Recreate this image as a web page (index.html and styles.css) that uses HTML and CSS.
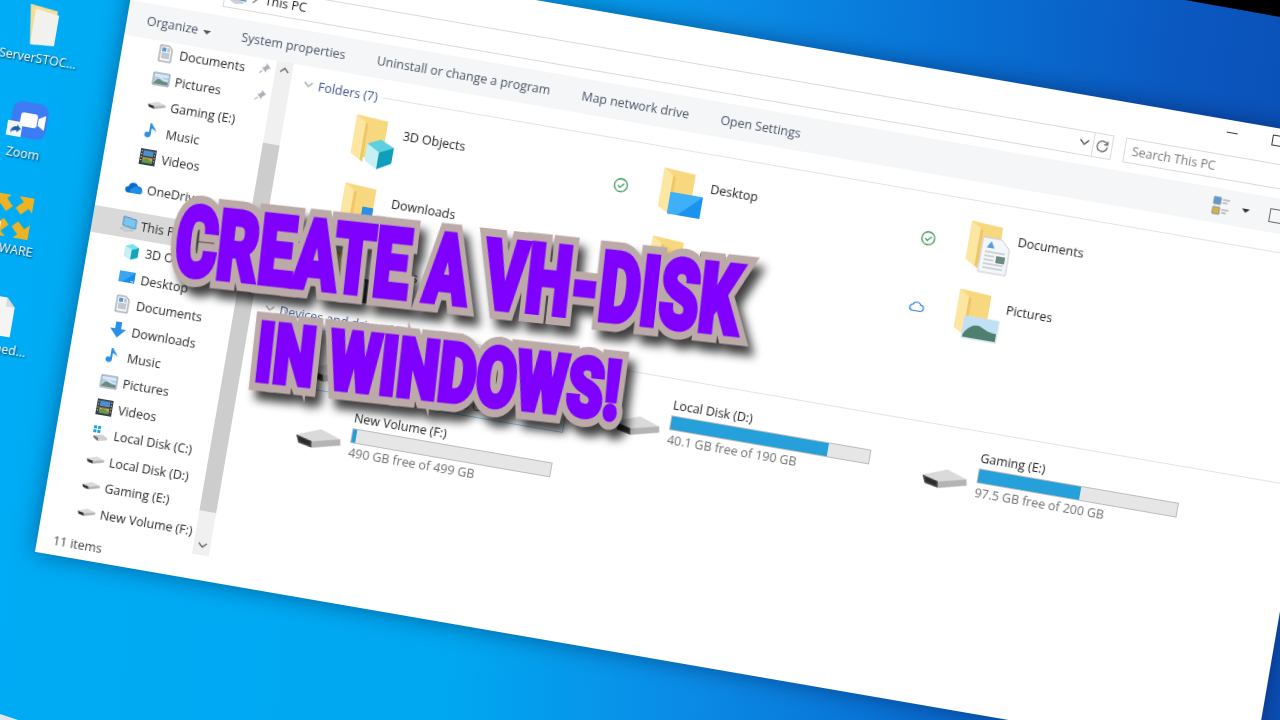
FILE: index.html
```html
<!DOCTYPE html>
<html lang="en">
<head>
    <meta charset="UTF-8">
    <meta name="viewport" content="width=device-width, initial-scale=1.0">
    <title>Create a VH-Disk in Windows</title>
    <link rel="stylesheet" href="styles.css">
</head>
<body>
    <!-- icon sprite -->
    <svg class="sprite" aria-hidden="true">
        <symbol id="i-doc" viewBox="0 0 18 18"><path d="M3 1h9l3 3v13H3z" fill="#f3f5f7" stroke="#89929b"/><path d="M5 3h4v4H5z" fill="#5b9bd5"/><path d="M5 9h8M5 11h8M5 13h8M10 4h3M10 6h3" stroke="#8f9aa5"/></symbol>
        <symbol id="i-pic" viewBox="0 0 18 18"><path d="M1 3h16v12H1z" fill="#d6e8f5" stroke="#7e8e9c"/><path d="M2 13c2-4 4-5 6-4s5 2 8 2v3H2z" fill="#6d8a80"/><path d="M2 7h14v2c-3 0-5-1-7-2-2 0-4 1-7 4z" fill="#a9cbe4"/></symbol>
        <symbol id="i-note" viewBox="0 0 18 18"><path d="M8 1v11.5a3.2 2.8 0 1 1-2-2.500V1z" fill="#2a90e8"/><path d="M8 1c1 3.500 5 4 4.500 8.500C12 7 10 6.500 8 6z" fill="#2a90e8"/></symbol>
        <symbol id="i-film" viewBox="0 0 18 18"><path d="M1 1h16v16H1z" fill="#3a3f46"/><path d="M4 2.500h10v5.500H4z" fill="#4d8fcf"/><path d="M4 9.500h10V15H4z" fill="#d6a53a"/><path d="M4 12l4-2 6 3v2H4z" fill="#5f9b4c"/><path d="M2 3h1v1H2zM2 6h1v1H2zM2 9h1v1H2zM2 12h1v1H2zM15 3h1v1h-1zM15 6h1v1h-1zM15 9h1v1h-1zM15 12h1v1h-1z" fill="#e6e6e6"/></symbol>
        <symbol id="i-cloud" viewBox="0 0 20 14"><path d="M4 12.500a3.500 3.500 0 0 1-.5-7A5.500 5.500 0 0 1 14 4.200 4.200 4.200 0 0 1 15.500 12.500z" fill="#0a6cc8"/><path d="M8 12.500a2.500 2.500 0 0 1 0-5 4 4 0 0 1 7.500-.8 3 3 0 0 1 4 3 2.800 2.800 0 0 1-2.500 2.800z" fill="#1f8fe6"/></symbol>
        <symbol id="i-pc" viewBox="0 0 18 18"><path d="M4 2l13 2v9L4 11z" fill="#7cc4f2" stroke="#4d8fbf"/><path d="M2 14l8-1 5 2-8 1.500z" fill="#cfd6dc" stroke="#9aa4ad" stroke-width=".5"/></symbol>
        <symbol id="i-cube" viewBox="0 0 18 18"><path d="M9 1l7 3-7 3-7-3z" fill="#7fe0ec"/><path d="M2 4l7 3v10l-7-3z" fill="#c5f0f4"/><path d="M16 4L9 7v10l7-3z" fill="#12a3bd"/></symbol>
        <symbol id="i-desk" viewBox="0 0 18 18"><path d="M1 3h16v11H1z" fill="#1a8de8"/><path d="M1 3h16L5 14H1z" fill="#3aa5f2"/><path d="M13 12h3v1h-3z" fill="#e6f3fc"/></symbol>
        <symbol id="i-down" viewBox="0 0 18 18"><path d="M6 1h6v7h5l-8 9-8-9h5z" fill="#2a8fe6"/></symbol>
        <symbol id="i-drive" viewBox="0 0 46 26"><path d="M.5 11.800L24.300 2.600l20.400 6.700 1 5.900L18 22.300 3.900 19.600z" fill="#dadada"/><path d="M17 16L44.700 9.300l1 5.900L18 22.300z" fill="#b4b4b4"/><path d="M.5 11.800l16.200 4 1.100 6.500-13.900-2.700z" fill="#454545"/><path d="M3 13.500l12 3 .6 3.600-10.700-2z" fill="#2a2a2a"/></symbol>
        <symbol id="i-sys" viewBox="0 0 18 18"><path d="M2 1h3v3H2zM6 1h3v3H6zM2 5h3v3H2zM6 5h3v3H6z" fill="#16a8d8"/><path d="M3 11l9-2 5 3v2l-9 2-5-3z" fill="#d0d0d0"/><path d="M3 11l5 2v3l-5-3z" fill="#6a6a6a"/></symbol>
        <symbol id="i-pin" viewBox="0 0 14 14"><path d="M8 1l5 5-2 .6-2.500 2.500.2 2.400L3 6l2.400.2L8 3.500z" fill="#a9afb5"/><path d="M4.500 9.500L1.500 12.500" stroke="#a9afb5" stroke-width="1.300"/></symbol>
        <symbol id="i-chev" viewBox="0 0 10 6"><path d="M1 1l4 4 4-4" fill="none" stroke="currentColor" stroke-width="1.200"/></symbol>
        <symbol id="i-check" viewBox="0 0 16 16"><circle cx="8" cy="8" r="6.500" fill="#fff" stroke="#3f9a62" stroke-width="1.300"/><path d="M5 8.200l2.200 2.200L11.200 6" fill="none" stroke="#3f9a62" stroke-width="1.200"/></symbol>
        <symbol id="i-ocloud" viewBox="0 0 16 16"><path d="M4.500 12.500a3 3 0 0 1-.3-6A4.200 4.200 0 0 1 12 6.300a3.100 3.100 0 0 1 0 6.200z" fill="#fff" stroke="#2b80d6" stroke-width="1.200"/></symbol>
        <symbol id="folder" viewBox="0 0 54 56"><path d="M8 3l32 2v34L16 46z" fill="#f8d87f"/><path d="M8 3l13 8v38L8 42z" fill="#fde6a2"/><path d="M21 11v38l-3-2V9z" fill="#efc768"/></symbol>
        <symbol id="ov-cube" viewBox="0 0 54 56"><path d="M36 24l14 6-14 7-13-7z" fill="#5cd0e2"/><path d="M23 30l13 7v17l-13-7z" fill="#c5f0f4"/><path d="M50 30l-14 7v17l14-8z" fill="#0f9fba"/></symbol>
        <symbol id="ov-down" viewBox="0 0 54 56"><path d="M29 24h11v12h9L34.500 52 20 36h9z" fill="#2a8fe6"/></symbol>
        <symbol id="ov-desk" viewBox="0 0 54 56"><path d="M18 26h33v22H18z" fill="#1a93f0"/><path d="M18 26h33L28 48H18z" fill="#3fb0f7"/></symbol>
        <symbol id="ov-note" viewBox="0 0 54 56"><path d="M32 20h4v24a6 5 0 1 1-4-4.600z" fill="#2a8fe6"/><path d="M36 20c2 7 10 8 9 17-1-5-5-7-9-8z" fill="#2a8fe6"/></symbol>
        <symbol id="ov-doc" viewBox="0 0 54 56"><path d="M22 17h19l9 9v26H22z" fill="#f4f6f8" stroke="#c6ccd2"/><path d="M27 27l4-7 4 7z" fill="#5a9bd8"/><path d="M26 31h20M26 35h10M26 39h10M26 43h20M26 47h20" stroke="#a8b2bc"/><path d="M38 34h9v7h-9z" fill="#6d8a80"/></symbol>
        <symbol id="ov-pic" viewBox="0 0 54 56"><path d="M17 29h35v22H17z" fill="#bfe0f5" stroke="#d8dfe5"/><path d="M18 47c6-10 12-12 18-9s10 4 15 4v8H18z" fill="#4f7f6f"/></symbol>
        <symbol id="ov-film" viewBox="0 0 54 56"><path d="M20 26h30v24H20z" fill="#3a3f46"/><path d="M25 29h20v18H25z" fill="#4d8fcf"/></symbol>
    </svg>

    <div class="corner-black"></div>
    <div class="corner-white"></div>

    <!-- desktop shortcuts -->
    <div class="desk-icon di-server">
        <svg class="desk-svg" viewBox="0 0 40 44"><path d="M4 2l28 3v34L10 42z" fill="#f6dd95"/><path d="M10 6l24 3v31l-24 2z" fill="#f1f1ee"/></svg>
        <span>ServerSTOC...</span>
    </div>
    <div class="desk-icon di-zoom">
        <svg class="desk-svg" viewBox="0 0 40 44"><rect x="3" y="3" width="36" height="36" rx="9" fill="#3d7cf4"/><rect x="12" y="14" width="17" height="14" rx="3" fill="#fff"/><path d="M30 18l7-4v15l-7-4z" fill="#fff"/><rect x="0" y="24" width="15" height="15" fill="#f3f5f7"/><path d="M4 36c0-5 2-7 6-7v-2l4 4-4 4v-2c-3 0-5 1-6 3z" fill="#1f5fb0"/></svg>
        <span>Zoom</span>
    </div>
    <div class="desk-icon di-vm">
        <svg class="desk-svg" viewBox="0 0 40 44"><g fill="#eeb322"><path d="M1 1h15l-4 4 7 7-6 6-7-7-5 5z"/><path d="M39 1v15l-4-4-7 7-6-6 7-7-5-5z"/><path d="M39 43H24l4-4-7-7 6-6 7 7 5-5z"/><path d="M1 43V28l4 4 7-7 6 6-7 7 5 5z"/></g><rect x="0" y="29" width="10" height="11" fill="#f3f5f7"/></svg>
        <span>VMWARE</span>
    </div>
    <div class="desk-icon di-doc">
        <svg class="desk-svg" viewBox="0 0 40 44"><path d="M7 3h19l9 9v30H7z" fill="#f4f4f2"/><path d="M26 3l9 9h-9z" fill="#dcdcda"/></svg>
        <span>Published...</span>
    </div>

    <!-- explorer window -->
    <div class="window">
        <div class="titlebar">
            <div class="win-btn"><span class="win-min"></span></div>
            <div class="win-btn"><span class="win-max"></span></div>
            <div class="win-btn"><svg class="win-close" viewBox="0 0 11 11"><path d="M1 1l9 9M10 1l-9 9" stroke="#333"/></svg></div>
        </div>

        <div class="address-row">
            <div class="address">
                <svg class="nav-ico"><use href="#i-pc"/></svg>
                <svg class="addr-sep" viewBox="0 0 6 10"><path d="M1 1l4 4-4 4" fill="none" stroke="#777" stroke-width="1.200"/></svg>
                <span class="addr-text">This PC</span>
                <svg class="addr-chev"><use href="#i-chev"/></svg>
                <div class="refresh">
                    <svg viewBox="0 0 14 14"><path d="M11.500 4.500A5.200 5.200 0 1 0 12 7M11.800 1.200v3.600H8.200" fill="none" stroke="#6a6a6a" stroke-width="1.300"/></svg>
                </div>
            </div>
            <div class="search">Search This PC</div>
        </div>

        <div class="toolbar">
            <span class="tool organize">Organize <i class="caret"></i></span>
            <span class="tool">System properties</span>
            <span class="tool">Uninstall or change a program</span>
            <span class="tool">Map network drive</span>
            <span class="tool">Open Settings</span>
            <div class="tool-right">
                <svg class="view-ico" viewBox="0 0 18 20"><path d="M1 1h7v7H1z" fill="#5b9bd5" stroke="#8a949d"/><path d="M1 11h7v7H1z" fill="#d6b04a" stroke="#8a949d"/><path d="M10 3h7M10 6h5M10 13h7M10 16h5" stroke="#8a949d"/></svg>
                <i class="caret caret-dark"></i>
                <span class="panel-ico"></span>
            </div>
        </div>

        <div class="body">
            <div class="sidebar">
                <div class="nav">
                    <div class="nav-row"><svg class="nav-ico"><use href="#i-doc"/></svg>Documents<svg class="pin"><use href="#i-pin"/></svg></div>
                    <div class="nav-row"><svg class="nav-ico"><use href="#i-pic"/></svg>Pictures<svg class="pin"><use href="#i-pin"/></svg></div>
                    <div class="nav-row"><svg class="nav-ico nav-drive"><use href="#i-drive"/></svg>Gaming (E:)</div>
                    <div class="nav-row"><svg class="nav-ico"><use href="#i-note"/></svg>Music</div>
                    <div class="nav-row"><svg class="nav-ico"><use href="#i-film"/></svg>Videos</div>
                    <div class="nav-row nav-top nav-onedrive"><svg class="nav-ico"><use href="#i-cloud"/></svg>OneDrive</div>
                    <div class="nav-row nav-top nav-pc"><svg class="nav-ico"><use href="#i-pc"/></svg>This PC</div>
                    <div class="nav-row"><svg class="nav-ico"><use href="#i-cube"/></svg>3D Objects</div>
                    <div class="nav-row"><svg class="nav-ico"><use href="#i-desk"/></svg>Desktop</div>
                    <div class="nav-row"><svg class="nav-ico"><use href="#i-doc"/></svg>Documents</div>
                    <div class="nav-row"><svg class="nav-ico"><use href="#i-down"/></svg>Downloads</div>
                    <div class="nav-row"><svg class="nav-ico"><use href="#i-note"/></svg>Music</div>
                    <div class="nav-row"><svg class="nav-ico"><use href="#i-pic"/></svg>Pictures</div>
                    <div class="nav-row"><svg class="nav-ico"><use href="#i-film"/></svg>Videos</div>
                    <div class="nav-row"><svg class="nav-ico"><use href="#i-sys"/></svg>Local Disk (C:)</div>
                    <div class="nav-row"><svg class="nav-ico nav-drive"><use href="#i-drive"/></svg>Local Disk (D:)</div>
                    <div class="nav-row"><svg class="nav-ico nav-drive"><use href="#i-drive"/></svg>Gaming (E:)</div>
                    <div class="nav-row"><svg class="nav-ico nav-drive"><use href="#i-drive"/></svg>New Volume (F:)</div>
                </div>
                <div class="scrollbar">
                    <div class="scroll-up"><svg class="scroll-chev flip"><use href="#i-chev"/></svg></div>
                    <div class="scroll-thumb"></div>
                    <div class="scroll-down"><svg class="scroll-chev"><use href="#i-chev"/></svg></div>
                </div>
            </div>

            <div class="main">
                <div class="group-head">
                    <svg class="group-chev"><use href="#i-chev"/></svg>
                    <span>Folders (7)</span>
                    <span class="group-rule"></span>
                </div>
                <div class="folder-grid">
                    <div class="folder-item">
                        <svg class="folder-ico"><use href="#folder"/><use href="#ov-cube"/></svg>
                        <span class="folder-name">3D Objects</span>
                        <svg class="status"><use href="#i-check"/></svg>
                    </div>
                    <div class="folder-item">
                        <svg class="folder-ico"><use href="#folder"/><use href="#ov-desk"/></svg>
                        <span class="folder-name">Desktop</span>
                        <svg class="status"><use href="#i-check"/></svg>
                    </div>
                    <div class="folder-item">
                        <svg class="folder-ico"><use href="#folder"/><use href="#ov-doc"/></svg>
                        <span class="folder-name">Documents</span>
                    </div>
                    <div class="folder-item">
                        <svg class="folder-ico"><use href="#folder"/><use href="#ov-down"/></svg>
                        <span class="folder-name">Downloads</span>
                    </div>
                    <div class="folder-item">
                        <svg class="folder-ico"><use href="#folder"/><use href="#ov-note"/></svg>
                        <span class="folder-name">Music</span>
                        <svg class="status"><use href="#i-ocloud"/></svg>
                    </div>
                    <div class="folder-item">
                        <svg class="folder-ico"><use href="#folder"/><use href="#ov-pic"/></svg>
                        <span class="folder-name">Pictures</span>
                    </div>
                    <div class="folder-item">
                        <svg class="folder-ico"><use href="#folder"/><use href="#ov-film"/></svg>
                        <span class="folder-name">Videos</span>
                    </div>
                </div>

                <div class="group-head">
                    <svg class="group-chev"><use href="#i-chev"/></svg>
                    <span>Devices and drives (4)</span>
                    <span class="group-rule"></span>
                </div>
                <div class="drive-grid">
                    <div class="drive drive-selected">
                        <svg class="drive-ico"><use href="#i-drive"/></svg>
                        <div class="drive-info">
                            <span class="drive-name">Local Disk (C:)</span>
                            <div class="bar"><div class="bar-fill" style="width: 60%"></div></div>
                            <span class="drive-free">74.2 GB free of 186 GB</span>
                        </div>
                    </div>
                    <div class="drive">
                        <svg class="drive-ico"><use href="#i-drive"/></svg>
                        <div class="drive-info">
                            <span class="drive-name">Local Disk (D:)</span>
                            <div class="bar"><div class="bar-fill" style="width: 79%"></div></div>
                            <span class="drive-free">40.1 GB free of 190 GB</span>
                        </div>
                    </div>
                    <div class="drive">
                        <svg class="drive-ico"><use href="#i-drive"/></svg>
                        <div class="drive-info">
                            <span class="drive-name">Gaming (E:)</span>
                            <div class="bar"><div class="bar-fill" style="width: 51%"></div></div>
                            <span class="drive-free">97.5 GB free of 200 GB</span>
                        </div>
                    </div>
                    <div class="drive">
                        <svg class="drive-ico"><use href="#i-drive"/></svg>
                        <div class="drive-info">
                            <span class="drive-name">New Volume (F:)</span>
                            <div class="bar"><div class="bar-fill" style="width: 2%"></div></div>
                            <span class="drive-free">490 GB free of 499 GB</span>
                        </div>
                    </div>
                </div>
            </div>
        </div>

        <div class="statusbar">11 items</div>
    </div>

    <!-- thumbnail title, sits over the window -->
    <div class="headline">
        <div class="headline-line line-one" data-text="CREATE A VH-DISK">CREATE A VH-DISK</div>
        <div class="headline-line line-two" data-text="IN WINDOWS!">IN WINDOWS!</div>
    </div>
</body>
</html>
```

FILE: styles.css
```css
* {
    box-sizing: border-box;
}

html, body {
    margin: 0;
    height: 100%;
}

body {
    position: relative;
    width: 1280px;
    height: 720px;
    overflow: hidden;
    font-family: "Open Sans", "Noto Sans", sans-serif;
    font-size: 12.45px;
    color: #222;
    background: linear-gradient(95deg, #00acf5 0%, #00a7f1 38%, #0a8ce6 55%, #0873d6 70%, #0a58c0 88%, #0a4fb6 100%);
}

.sprite {
    position: absolute;
    width: 0;
    height: 0;
}

.corner-black {
    position: absolute;
    left: 1185px;
    top: 0;
    width: 95px;
    height: 17px;
    background: #000;
    clip-path: polygon(0 0, 100% 0, 100% 100%);
}

.corner-white {
    position: absolute;
    left: 0;
    top: 714px;
    width: 18px;
    height: 6px;
    background: #dfe7ec;
    clip-path: polygon(0 0, 100% 100%, 0 100%);
}

/* desktop shortcuts */
.desk-icon {
    position: absolute;
    width: 90px;
    height: 70px;
    display: flex;
    flex-direction: column;
    align-items: center;
    gap: 2px;
    transform: rotate(9.8deg);
    filter: blur(0.3px);
    color: #fff;
    line-height: 18px;
    text-shadow: 1px 1px 2px rgba(0, 0, 0, 0.75);
    white-space: nowrap;
}

.desk-svg {
    width: 40px;
    height: 44px;
    flex: none;
}

.di-server { left: -4px; top: 4px; }
.di-zoom { left: -19px; top: 99px; }
.di-vm { left: -35px; top: 194px; }
.di-doc { left: -49px; top: 293px; }

/* explorer window */
.window {
    position: absolute;
    left: 141.7px;
    top: -68px;
    width: 1237px;
    height: 629px;
    background: #fff;
    transform: rotate(9.8deg);
    transform-origin: 0 0;
    filter: blur(0.3px);
    box-shadow: 0 0 22px rgba(0, 10, 50, 0.45);
    display: flex;
    flex-direction: column;
}

.titlebar {
    height: 35px;
    padding-right: 14px;
    display: flex;
    justify-content: flex-end;
}

.win-btn {
    width: 46px;
    height: 24px;
    display: flex;
    align-items: center;
    justify-content: center;
}

.win-min {
    width: 11px;
    height: 1px;
    background: #333;
}

.win-max {
    width: 11px;
    height: 11px;
    border: 1px solid #333;
}

.win-close {
    width: 11px;
    height: 11px;
}

.address-row {
    height: 25px;
    padding-left: 92px;
    display: flex;
    gap: 12px;
}

.address {
    width: 901px;
    display: flex;
    align-items: center;
    padding-left: 4px;
    padding-bottom: 2px;
    border: 1px solid #d9d9d9;
}

.addr-sep {
    width: 6px;
    height: 10px;
    margin-left: 5px;
    margin-right: 7px;
}

.addr-text {
    flex: 1;
}

.addr-chev {
    width: 11px;
    height: 7px;
    margin-right: 3px;
    color: #555;
}

.refresh {
    width: 19px;
    height: calc(100% + 2px);
    margin-bottom: -2px;
    display: flex;
    align-items: center;
    justify-content: center;
    border-left: 1px solid #d9d9d9;
}

.refresh svg {
    width: 14px;
    height: 14px;
}

.search {
    width: 215px;
    padding-left: 7px;
    line-height: 23px;
    color: #7a7a7a;
    border: 1px solid #d9d9d9;
}

.toolbar {
    height: 35px;
    margin-top: 9px;
    padding-left: 20px;
    padding-right: 60px;
    display: flex;
    align-items: center;
    gap: 32px;
    color: #4a5568;
    background: #f5f6f7;
    white-space: nowrap;
}

.organize {
    width: 64px;
}

.caret {
    display: inline-block;
    width: 0;
    height: 0;
    margin-left: 2px;
    vertical-align: middle;
    border-left: 4px solid transparent;
    border-right: 4px solid transparent;
    border-top: 4px solid #555;
}

.tool-right {
    margin-left: auto;
    display: flex;
    align-items: center;
}

.view-ico {
    width: 18px;
    height: 20px;
}

.caret-dark {
    margin-left: 12px;
    border-top-color: #333;
}

.panel-ico {
    width: 18px;
    height: 14px;
    margin-left: 20px;
    border: 1px solid #666;
}

.body {
    flex: 1;
    min-height: 0;
    display: flex;
}

.sidebar {
    width: 172px;
    flex: none;
    display: flex;
}

.nav {
    width: 155px;
    margin-top: -1.5px;
    white-space: nowrap;
}

.nav-row {
    height: 26.45px;
    padding-left: 35px;
    display: flex;
    align-items: center;
    gap: 5px;
    color: #2a2a2a;
}

.nav-top {
    padding-left: 27px;
    gap: 4px;
}

.nav-onedrive {
    margin-top: 6px;
}

.nav-pc {
    margin-top: 10px;
    background: #d9d9d9;
}

.nav-ico {
    width: 18px;
    height: 18px;
    flex: none;
}

.nav-drive {
    height: 11px;
}

.pin {
    width: 13px;
    height: 13px;
    margin-left: auto;
    margin-right: 4px;
    margin-top: -4px;
}

.scrollbar {
    width: 17px;
    flex: none;
    display: flex;
    flex-direction: column;
    background: #f0f0f0;
}

.scroll-up {
    height: 83px;
    padding-top: 5px;
    display: flex;
    justify-content: center;
}

.scroll-thumb {
    flex: 1;
    background: #cdcdcd;
}

.scroll-down {
    height: 44px;
    padding-top: 31px;
    display: flex;
    justify-content: center;
}

.scroll-chev {
    width: 10px;
    height: 6px;
    color: #555;
}

.flip {
    transform: rotate(180deg);
}

.main {
    flex: 1;
    min-width: 0;
    padding-top: 9px;
    padding-left: 13px;
}

.group-head {
    height: 18px;
    display: flex;
    align-items: center;
    color: #3d5492;
    white-space: nowrap;
}

.group-chev {
    width: 10px;
    height: 6px;
    margin-right: 5px;
    color: #9aa0a8;
}

.group-rule {
    flex: 1;
    height: 1px;
    margin-left: 5px;
    background: #e2e4e8;
}

.folder-grid {
    margin-top: 2px;
    margin-left: 44px;
    display: grid;
    grid-template-columns: repeat(3, 312px);
    grid-auto-rows: 69px;
}

.folder-item {
    padding-left: 6px;
    padding-right: 18px;
    display: flex;
    align-items: center;
    gap: 3px;
}

.folder-ico {
    width: 54px;
    height: 56px;
    flex: none;
}

.folder-name {
    margin-bottom: 22px;
    color: #1f1f1f;
}

.status {
    width: 16px;
    height: 16px;
    margin-left: auto;
}

.drive-grid {
    margin-top: 4px;
    margin-left: 44px;
    display: grid;
    grid-template-columns: repeat(3, 312px);
    grid-auto-rows: 60px;
    row-gap: 7px;
}

.drive {
    width: 271px;
    padding-top: 5px;
    padding-left: 8px;
    display: flex;
    gap: 9px;
}

.drive-selected {
    border: 1px solid #99d1ff;
    padding-top: 4px;
    padding-left: 7px;
}

.drive-ico {
    width: 46px;
    height: 26px;
    margin-top: 23px;
    flex: none;
}

.drive-info {
    width: 203px;
    display: flex;
    flex-direction: column;
    line-height: 18px;
    white-space: nowrap;
}

.drive-name {
    margin-bottom: 1px;
    color: #1f1f1f;
}

.drive-free {
    color: #6f6f6f;
}

.bar {
    height: 15px;
    margin-bottom: 1px;
    background: #e6e6e6;
    border: 1px solid #bcbcbc;
}

.bar-fill {
    height: 100%;
    background: #26a0da;
}

.statusbar {
    height: 25px;
    padding-left: 16px;
    line-height: 22px;
    color: #444;
}

/* thumbnail title */
.headline {
    position: absolute;
    left: 53px;
    top: 220px;
    width: 800px;
    height: 204px;
    transform: rotate(6.2deg);
    filter: drop-shadow(7px 9px 5px rgba(0, 0, 0, 0.75));
    font-family: Roboto, "Liberation Sans", sans-serif;
    font-weight: 900;
    white-space: nowrap;
    display: flex;
    flex-direction: column;
    align-items: center;
}

.headline-line {
    position: relative;
    color: #bcaaa9;
    -webkit-text-stroke: 21px #bcaaa9;
    text-shadow: 8px 0 #bcaaa9, -8px 0 #bcaaa9;
    paint-order: stroke fill;
}

.headline-line::after {
    content: attr(data-text);
    position: absolute;
    left: 0;
    top: 0;
    color: #7f00ff;
    -webkit-text-stroke: 5px #7f00ff;
    text-shadow: none;
}

.line-one {
    height: 102px;
    font-size: 96px;
    line-height: 102px;
    transform: scaleX(0.665);
}

.line-two {
    height: 102px;
    font-size: 82px;
    line-height: 102px;
    transform: translateX(-9px) scaleX(0.715);
}
```
